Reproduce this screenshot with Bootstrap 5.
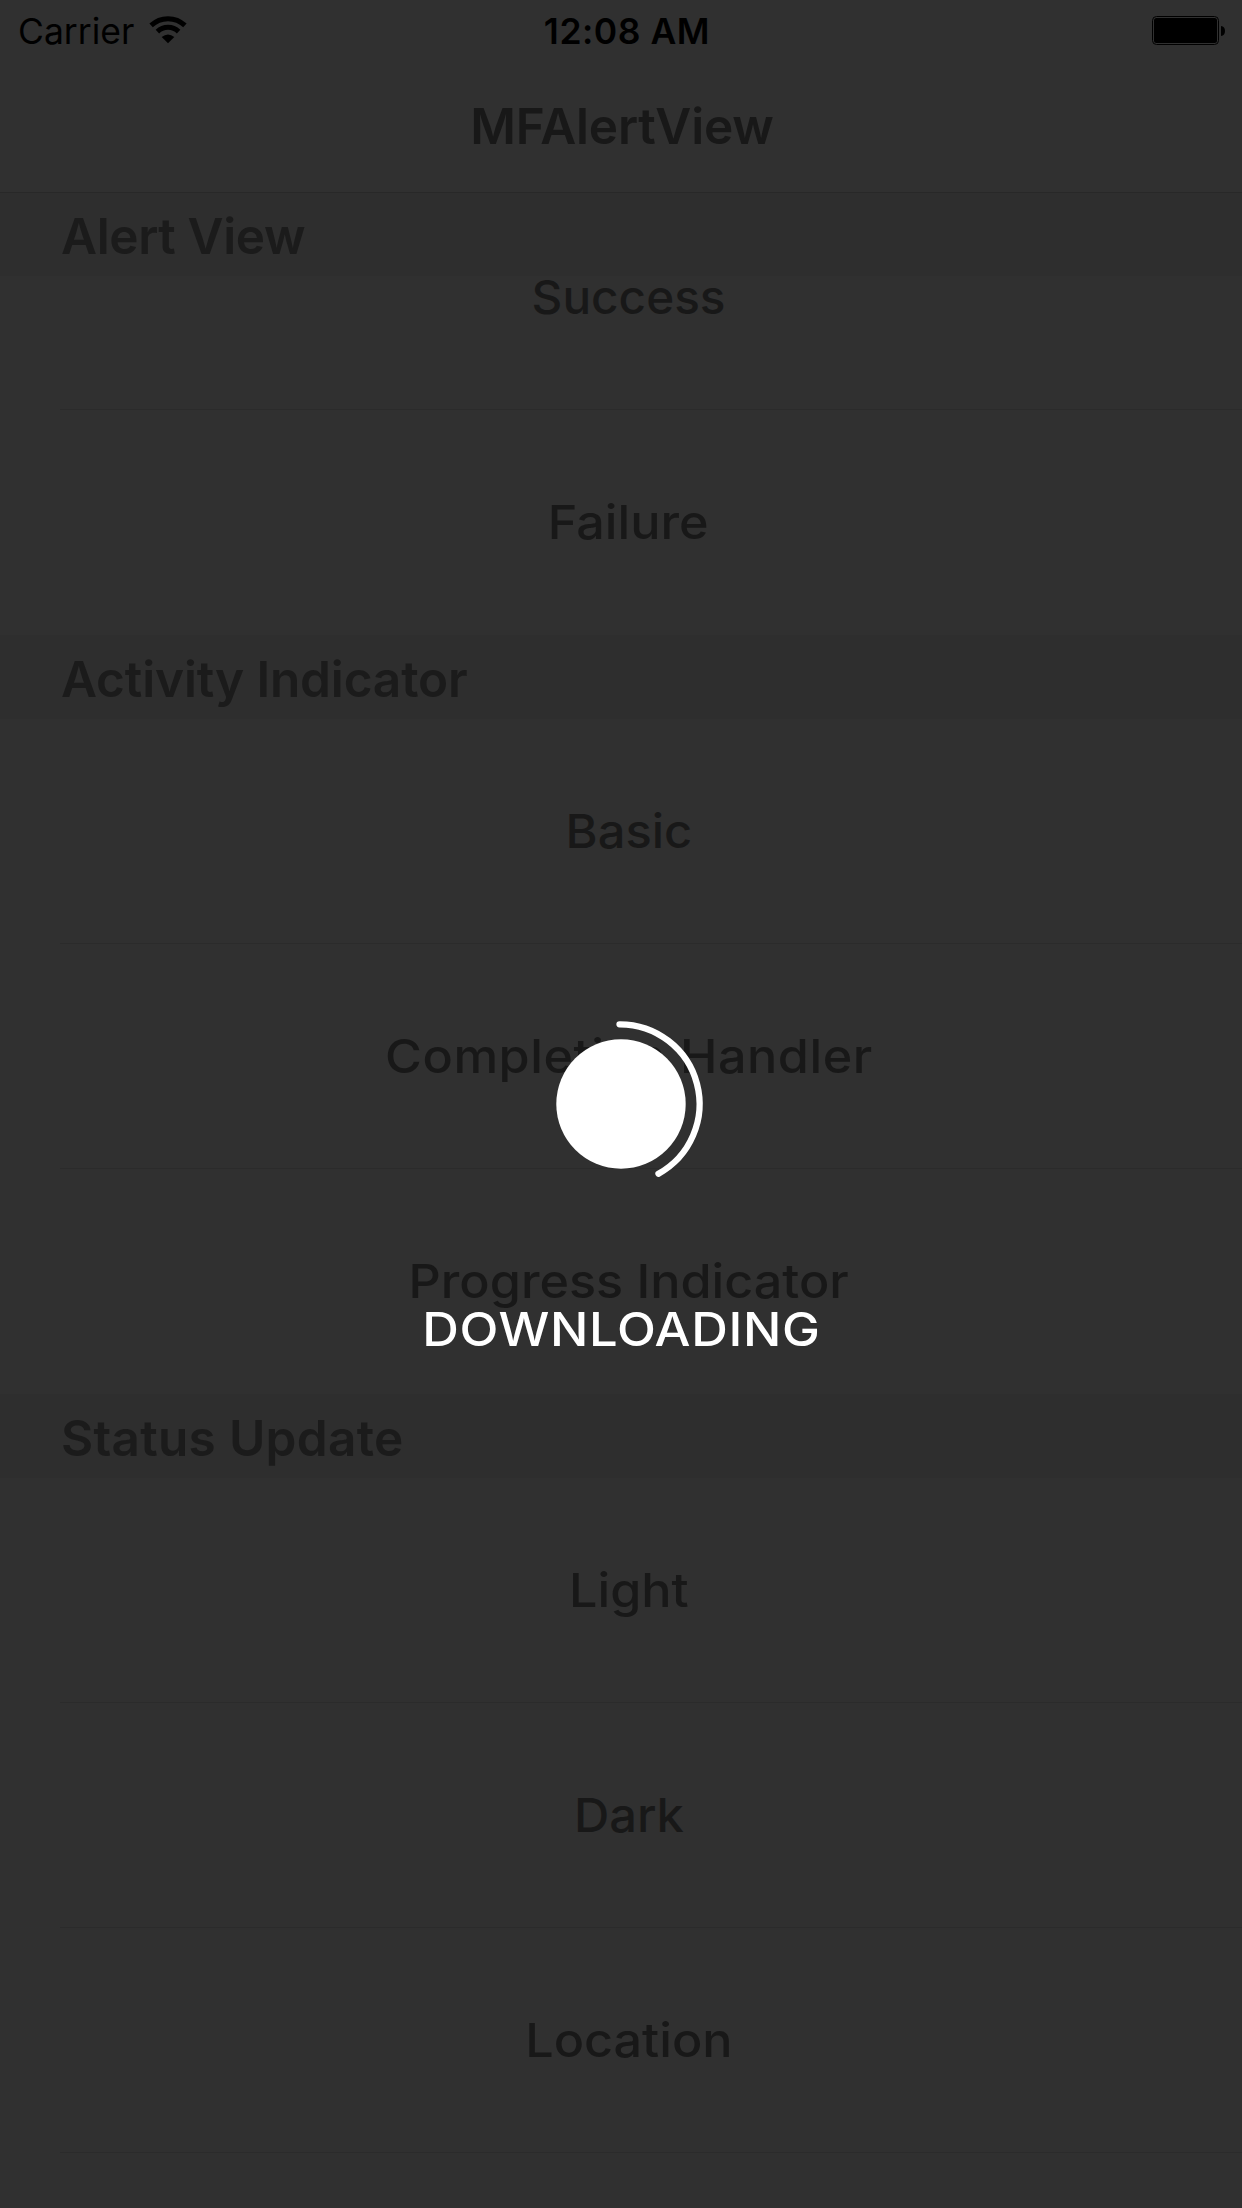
<!DOCTYPE html>
<html lang="en">
<head>
<meta charset="utf-8">
<meta name="viewport" content="width=device-width, initial-scale=1">
<title>MFAlertView</title>
<link href="https://cdn.jsdelivr.net/npm/bootstrap@5.3.0/dist/css/bootstrap.min.css" rel="stylesheet">
<style>
  body { background: #303030; font-family: Inter, "Liberation Sans", sans-serif; }
  .screen { width: 1242px; height: 2208px; background: #303030; }
  .top-area { height: 193px; border-bottom: 1px solid #282828; }
  .status-line { height: 60px; padding: 3px 17px 0 18px; color: #000; font-size: 35.5px; line-height: 57px; }
  .status-line > div { flex: 1 1 0; }
  .clock { font-weight: 600; letter-spacing: .52px; padding-left: 11px; }
  .wifi { margin-left: 15px; margin-top: -3px; }
  .battery { margin-top: -2px; }
  .title { height: 132px; color: #181818; font-size: 49.5px; font-weight: 600; letter-spacing: -.17px; padding-left: 2px; }
  .section-head { height: 84px; padding: 4px 0 0 61px; background: #2e2e2e; color: #1b1b1b; font-size: 49.5px; font-weight: 600; line-height: 80px; letter-spacing: -.14px; }
  .section-head.pinned { height: 83px; padding-top: 3px; letter-spacing: -.36px; }
  .section-head.wider { letter-spacing: .3px; }
  .option { height: 225px; padding: 0 0 1px 15px; color: #181818; font-size: 47px; font-weight: 500; }
  .option.ruled { background: linear-gradient(#2b2b2b, #2b2b2b) 60px 100% / 100% 1px no-repeat; }
  .option.scrolled { margin-top: -91px; }
  .option span, .message span { display: inline-block; transform: scaleX(1.07); }
  .option .snug { transform: scaleX(1.04); }
  .option.scrolled span { transform: scaleX(1.015); }
  .option.loose { letter-spacing: .5px; }
  .spinner { left: 541px; top: 1012px; }
  .message { top: 1299px; color: #fff; font-size: 47px; font-weight: 500; line-height: 59px; letter-spacing: .56px; }
  .message span { transform: scaleX(1.08); }
</style>
</head>
<body>
<div class="screen position-relative overflow-hidden">
  <header class="top-area position-relative z-1">
    <div class="status-line d-flex align-items-center">
      <div class="d-flex align-items-center">
        <span>Carrier</span>
        <svg class="wifi" width="38" height="28" viewBox="0 0 38 28" aria-hidden="true">
          <g fill="none" stroke="#000" stroke-width="5">
            <path d="M2.1 9.4A24.5 24.5 0 0 1 35.9 9.4"/>
            <path d="M8.4 15.6A15.3 15.3 0 0 1 29.6 15.6"/>
          </g>
          <path d="M12.700 21Q19 15.800 25.300 21L19 27.200Z" fill="#000"/>
        </svg>
      </div>
      <div class="clock text-center">12:08 AM</div>
      <div class="d-flex justify-content-end">
        <svg class="battery" width="73" height="29" viewBox="0 0 73 29" aria-hidden="true">
          <rect x=".5" y=".5" width="66" height="28" rx="4" fill="none" stroke="#000"/>
          <rect x="2" y="2" width="63" height="25" rx="2.5" fill="#000"/>
          <path d="M69 10Q73 10.500 73 15T69 20Z" fill="#000"/>
        </svg>
      </div>
    </div>
    <div class="title d-flex align-items-center justify-content-center">MFAlertView</div>
  </header>
  <main>
    <section>
      <div class="section-head pinned position-relative z-1">Alert View</div>
      <div class="option ruled scrolled d-flex align-items-center justify-content-center"><span>Success</span></div>
      <div class="option d-flex align-items-center justify-content-center"><span>Failure</span></div>
    </section>
    <section>
      <div class="section-head">Activity Indicator</div>
      <div class="option ruled d-flex align-items-center justify-content-center"><span class="snug">Basic</span></div>
      <div class="option ruled loose d-flex align-items-center justify-content-center"><span>Completion Handler</span></div>
      <div class="option d-flex align-items-center justify-content-center"><span>Progress Indicator</span></div>
    </section>
    <section>
      <div class="section-head wider">Status Update</div>
      <div class="option ruled d-flex align-items-center justify-content-center"><span>Light</span></div>
      <div class="option ruled d-flex align-items-center justify-content-center"><span class="snug">Dark</span></div>
      <div class="option ruled d-flex align-items-center justify-content-center"><span>Location</span></div>
    </section>
  </main>
  <svg class="spinner position-absolute z-2" width="170" height="184" viewBox="0 0 170 184" aria-hidden="true">
    <circle cx="80" cy="92" r="64.700" fill="#fff"/>
    <path d="M78.500 12.300A79.700 79.700 0 0 1 117.500 161.700" fill="none" stroke="#fff" stroke-width="6.300" stroke-linecap="round"/>
  </svg>
  <div class="message position-absolute start-0 w-100 text-center z-2"><span>DOWNLOADING</span></div>
</div>
<script src="https://cdn.jsdelivr.net/npm/bootstrap@5.3.0/dist/js/bootstrap.bundle.min.js"></script>
</body>
</html>
